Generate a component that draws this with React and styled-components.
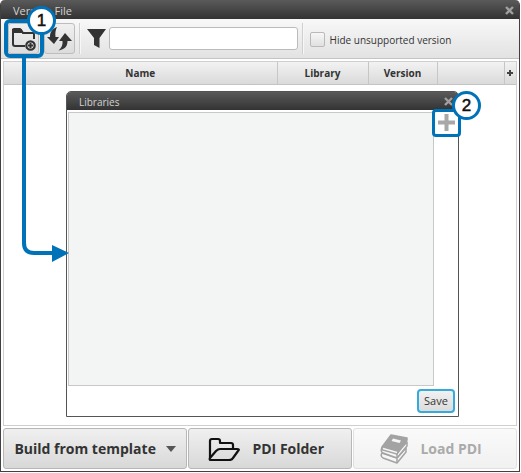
import React from 'react';
import styled, { createGlobalStyle } from 'styled-components';

const GlobalStyle = createGlobalStyle`
  * {
    box-sizing: border-box;
  }
  body {
    margin: 0;
    background: #fff;
    color: #333;
    font-family: 'Open Sans', 'Noto Sans', sans-serif;
    font-size: 10px;
  }
  button, input {
    font-family: inherit;
    color: inherit;
  }
`;

const Page = styled.div`
  min-height: 100vh;
  display: flex;
  padding: 0 1px 1px 0;
`;

const Window = styled.div`
  position: relative;
  flex: 1;
  min-width: 0;
  display: flex;
  flex-direction: column;
  border: 1px solid #414141;
  border-top: 0;
  border-radius: 5px 5px 0 0;
  background: #fff;
`;

const TitleBar = styled.header`
  display: flex;
  align-items: center;
  justify-content: space-between;
  height: ${props => (props.$inner ? '18px' : '19px')};
  padding: 2px 5px 0 12px;
  border-radius: 4px 4px 0 0;
  background: linear-gradient(#5a5a5a, #333);
  color: #d2d2d2;
`;

const Title = styled.h1`
  margin: 0;
  font-size: ${props => (props.$inner ? '10px' : '11px')};
  font-weight: 400;
  line-height: 16px;
`;

const CloseButton = styled.button`
  display: flex;
  padding: 0;
  border: 0;
  background: none;
`;

const Toolbar = styled.div`
  display: flex;
  align-items: center;
  height: 40px;
  padding: 0 3px;
  border-bottom: 1px solid #c4c4c4;
  background: linear-gradient(#f8f8f8, #e2e2e2);
`;

const ToolButton = styled.button`
  display: flex;
  align-items: center;
  justify-content: center;
  width: 31px;
  height: 31px;
  padding: 0;
  border: 1px solid #bdbdbd;
  border-radius: 3px;
  background: linear-gradient(#f0f0f0, #dcdcdc);
`;

const Highlight = styled.div`
  position: relative;
  display: flex;
  align-items: center;
  justify-content: center;
  width: ${props => (props.$small ? '29px' : '40px')};
  height: ${props => (props.$small ? '28px' : '39px')};
  border: ${props => (props.$small ? '3px' : '4px')} solid #0072b7;
  border-radius: ${props => (props.$small ? '4px' : '6px')};
  background: ${props => (props.$small ? '#fff' : 'none')};
`;

const Badge = styled.span`
  position: absolute;
  top: ${props => props.$top};
  left: ${props => props.$left};
  z-index: 2;
  width: 29px;
  height: 29px;
  border: 3px solid #0072b7;
  border-radius: 50%;
  background: #fff;
  color: #111;
  font: 17px/23px 'Liberation Sans', sans-serif;
  -webkit-text-stroke: 0.5px #111;
  text-align: center;
`;

const Separator = styled.span`
  width: 2px;
  height: 31px;
  border-left: 1px solid #cfcfcf;
  border-right: 1px solid #f7f7f7;
`;

const Spacer = styled.span`
  width: 4px;
`;

const FilterBox = styled.label`
  display: flex;
  flex: 1;
  align-items: center;
  gap: 3px;
  padding: 0 4px 0 6px;
`;

const FilterInput = styled.input`
  flex: 1;
  min-width: 0;
  height: 23px;
  padding: 0 6px;
  border: 1px solid #bbb;
  border-radius: 3px;
  background: #fff;
`;

const CheckLabel = styled.label`
  display: flex;
  align-items: center;
  gap: 5px;
  width: 214px;
  padding: 2px 0 0 6px;
  white-space: nowrap;
`;

const CheckBox = styled.input`
  appearance: none;
  width: 15px;
  height: 15px;
  margin: 0;
  border: 1px solid #b9b9b9;
  border-radius: 2px;
  background: linear-gradient(#f7f7f7, #e0e0e0);
`;

const Content = styled.main`
  display: flex;
  flex: 1;
  flex-direction: column;
  margin: 2px 2px 0;
  border: 1px solid #cfcfcf;
`;

const VersionTable = styled.table`
  width: 100%;
  table-layout: fixed;
  border-collapse: collapse;
`;

const HeadCell = styled.th`
  width: ${props => props.$width || 'auto'};
  height: 22px;
  padding: 0;
  border-right: ${props => (props.$last ? '0' : '1px solid #c6c6c6')};
  border-bottom: 1px solid #c4c4c4;
  background: linear-gradient(#f2f2f2, #dadada);
  font-size: 10px;
  line-height: 20px;
  text-align: center;
`;

const AddColumnButton = styled.button`
  display: flex;
  align-items: center;
  justify-content: center;
  width: 100%;
  height: 18px;
  padding: 0;
  border: 0;
  background: none;
`;

const Body = styled.div`
  display: flex;
  flex: 1;
  padding: 6px 57px 8px 62px;
`;

const Dialog = styled.section`
  display: flex;
  flex: 1;
  flex-direction: column;
  border: 1px solid #555;
  border-radius: 5px 5px 0 0;
  background: #fff;
`;

const DialogBody = styled.div`
  display: flex;
  flex: 1;
  padding: 2px 0 0 1px;
`;

const LibraryList = styled.div`
  flex: 1;
  border: 1px solid #c8c8c8;
  background: #f3f4f4;
`;

const SideBar = styled.div`
  width: 26px;
  margin-top: -3px;
  margin-left: -2px;
`;

const PlusButton = styled.button`
  display: flex;
  padding: 0;
  border: 0;
  background: none;
`;

const DialogFooter = styled.div`
  display: flex;
  justify-content: flex-end;
  padding: 3px 3px 3px 0;
`;

const SaveButton = styled.button`
  width: 38px;
  height: 24px;
  padding: 0;
  border: 2px solid #35abdb;
  border-radius: 4px;
  background: linear-gradient(#f1f1f1, #dcdcdc);
  font-size: 11px;
  line-height: 18px;
`;

const Footer = styled.footer`
  display: grid;
  grid-template-columns: 9fr 8fr 8fr;
  gap: 1px;
  padding: 2px;
`;

const FooterButton = styled.button`
  display: flex;
  align-items: center;
  justify-content: center;
  gap: ${props => (props.$menu ? '10px' : '12px')};
  height: 41px;
  padding: ${props => (props.$menu ? '0' : '0 8px 0 0')};
  border: 1px solid #b7b7b7;
  border-radius: 3px;
  background: linear-gradient(#f0f0f0, #d8d8d8);
  font-size: 14px;
  font-weight: 700;
  white-space: nowrap;

  &:disabled {
    border-color: #e0e0e0;
    background: linear-gradient(#fafafa, #f1f1f1);
    color: #aaa;
  }
`;

const Arrow = styled.svg`
  position: absolute;
  top: 58px;
  left: 20px;
  pointer-events: none;
`;

function CloseIcon() {
  return (
    <svg width="9" height="9" viewBox="0 0 9 9" stroke="#a0a0a0" strokeWidth="2.4">
      <path d="M1 1l7 7M8 1l-7 7" />
    </svg>
  );
}

function FolderPlusIcon() {
  return (
    <svg width="26" height="26" viewBox="0 0 26 26" fill="none" stroke="#333" strokeWidth="2">
      <path d="M14 20H4a2 2 0 0 1-2-2V4h8l2 3h10a1 1 0 0 1 1 1v5" />
      <path d="M1 4q0-2 2-2h6q1 0 2 2l1 3H1z" fill="#333" stroke="none" />
      <circle cx="19.5" cy="19.500" r="4.2" strokeWidth="2.200" />
      <path d="M19.5 17v5M17 19.500h5" />
    </svg>
  );
}

function RefreshIcon() {
  return (
    <svg width="27" height="26" viewBox="0 0 27 26" fill="#333">
      <path d="M11 1C6 3 4 6 4 11H1l7 7 5-7H9.500C9 7 9.500 4 11 1z" />
      <path d="M19 7l-6 8h3.500c.5 4-1 7-4 9.500 6-1 9-4 9-9.500H26z" />
    </svg>
  );
}

function FilterIcon() {
  return (
    <svg width="19" height="19" viewBox="0 0 19 19" fill="#333">
      <path d="M0 0h19l-6.500 9v10l-5.500-3V9z" />
    </svg>
  );
}

function OpenFolderIcon() {
  return (
    <svg width="32" height="24" viewBox="0 0 32 24" fill="none" stroke="#111" strokeWidth="2.200" strokeLinejoin="round">
      <path d="M2 21V4q0-2 2-2h6q2 0 2 2v2h11q2 0 2 2v4" />
      <path d="M2 21l6-7q2-2 4-2h17q3 0 1 2l-5 7q-1 2-4 2H3q-2 0-1-2z" />
    </svg>
  );
}

function BooksIcon() {
  return (
    <svg width="28" height="30" viewBox="0 0 28 30" stroke="#a3a3a3" strokeWidth="1.5" strokeLinejoin="round">
      <path d="M2 19q-2 3 1 5l14 5 9-11v-4l-9 10z" fill="#f6f6f6" />
      <path d="M2 14q-2 3 1 5l14 5 10-12V8L17 19z" fill="#f6f6f6" />
      <path d="M11 1L2 13q-1 3 1 3l14 4L27 6v-2z" fill="#a3a3a3" />
      <path d="M3 14.500l14 4" stroke="#f6f6f6" />
      <path d="M13 4.500l8 2-1.500 2.500-8-2z" fill="#f6f6f6" stroke="none" />
      <path d="M17 20v4M17 25v4" />
    </svg>
  );
}

function MainToolbar() {
  return (
    <Toolbar>
      <Highlight>
        <ToolButton aria-label="Add library">
          <FolderPlusIcon />
        </ToolButton>
        <Badge $top="-17px" $left="19px">1</Badge>
      </Highlight>
      <ToolButton aria-label="Refresh">
        <RefreshIcon />
      </ToolButton>
      <Spacer />
      <Separator />
      <FilterBox>
        <FilterIcon />
        <FilterInput type="text" aria-label="Filter" />
      </FilterBox>
      <Separator />
      <CheckLabel>
        <CheckBox type="checkbox" />
        Hide unsupported version
      </CheckLabel>
    </Toolbar>
  );
}

function LibrariesDialog() {
  return (
    <Dialog role="dialog" aria-label="Libraries">
      <TitleBar $inner>
        <Title as="h2" $inner>Libraries</Title>
        <CloseButton aria-label="Close libraries"><CloseIcon /></CloseButton>
      </TitleBar>
      <DialogBody>
        <LibraryList />
        <SideBar>
          <Highlight $small>
            <PlusButton aria-label="Add">
              <svg width="17" height="17" viewBox="0 0 17 17" stroke="#a8a8a8" strokeWidth="4">
                <path d="M8.5 0v17M0 8.5h17" />
              </svg>
            </PlusButton>
            <Badge $top="-21px" $left="17px">2</Badge>
          </Highlight>
        </SideBar>
      </DialogBody>
      <DialogFooter>
        <SaveButton>Save</SaveButton>
      </DialogFooter>
    </Dialog>
  );
}

export default function App() {
  return (
    <>
      <GlobalStyle />
      <Page>
        <Window>
          <TitleBar>
            <Title>Version File</Title>
            <CloseButton aria-label="Close"><CloseIcon /></CloseButton>
          </TitleBar>
          <MainToolbar />
          <Content>
            <VersionTable>
              <thead>
                <tr>
                  <HeadCell>Name</HeadCell>
                  <HeadCell $width="91px">Library</HeadCell>
                  <HeadCell $width="69px">Version</HeadCell>
                  <HeadCell $width="67px" />
                  <HeadCell $width="12px" $last>
                    <AddColumnButton aria-label="Choose columns">
                      <svg width="6" height="6" viewBox="0 0 6 6" stroke="#444" strokeWidth="2">
                        <path d="M3 0v6M0 3h6" />
                      </svg>
                    </AddColumnButton>
                  </HeadCell>
                </tr>
              </thead>
            </VersionTable>
            <Body>
              <LibrariesDialog />
            </Body>
          </Content>
          <Footer>
            <FooterButton $menu>
              Build from template
              <svg width="10" height="6" viewBox="0 0 10 6" fill="#555"><path d="M0 0h10L5 6z" /></svg>
            </FooterButton>
            <FooterButton>
              <OpenFolderIcon />
              PDI Folder
            </FooterButton>
            <FooterButton disabled>
              <BooksIcon />
              Load PDI
            </FooterButton>
          </Footer>
          <Arrow width="50" height="206" viewBox="0 0 50 206">
            <path d="M3 0v185q0 10 10 10h20" fill="none" stroke="#0072b7" strokeWidth="4" />
            <path d="M31 187l17 8-17 9z" fill="#0072b7" />
          </Arrow>
        </Window>
      </Page>
    </>
  );
}
